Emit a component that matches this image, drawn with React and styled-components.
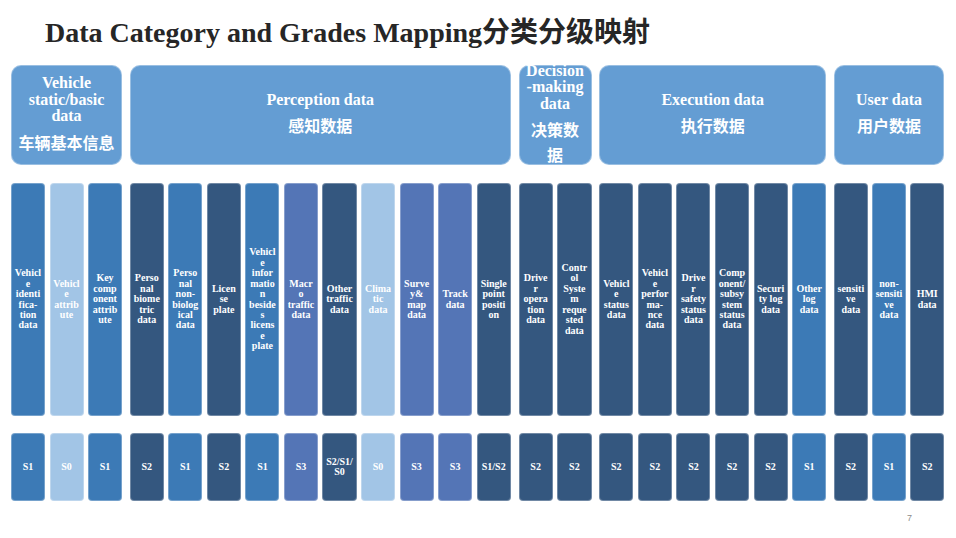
import styled, { createGlobalStyle } from "styled-components";

const GlobalStyle = createGlobalStyle`
	body {
		margin: 0;
		background: #fff;
	}
`;

const COLORS = {
	med: "#3c7ab6",
	light: "#a2c5e6",
	dark: "#34577f",
	peri: "#5475b6",
};

const COL_GAP = 4.5;

const groups = [
	{
		en: "Vehicle\nstatic/basic\ndata",
		zh: "车辆基本信息",
		width: 111,
		cols: [
			["Vehicl\ne\nidenti\nfica-\ntion\ndata", "med", "S1"],
			["Vehicl\ne\nattrib\nute", "light", "S0"],
			["Key\ncomp\nonent\nattrib\nute", "med", "S1"],
		],
	},
	{
		en: "Perception data",
		zh: "感知数据",
		width: 381,
		cols: [
			["Perso\nnal\nbiome\ntric\ndata", "dark", "S2"],
			["Perso\nnal\nnon-\nbiolog\nical\ndata", "med", "S1"],
			["Licen\nse\nplate", "dark", "S2"],
			["Vehicl\ne\ninfor\nmatio\nn\nbeside\ns\nlicens\ne\nplate", "med", "S1"],
			["Macr\no\ntraffic\ndata", "peri", "S3"],
			["Other\ntraffic\ndata", "dark", "S2/S1/\nS0"],
			["Clima\ntic\ndata", "light", "S0"],
			["Surve\ny&\nmap\ndata", "peri", "S3"],
			["Track\ndata", "peri", "S3"],
			["Single\npoint\npositi\non", "dark", "S1/S2"],
		],
	},
	{
		en: "Decision\n-making\ndata",
		zh: "决策数\n据",
		width: 73,
		cols: [
			["Drive\nr\nopera\ntion\ndata", "dark", "S2"],
			["Contr\nol\nSyste\nm\nreque\nsted\ndata", "dark", "S2"],
		],
	},
	{
		en: "Execution data",
		zh: "执行数据",
		width: 227,
		cols: [
			["Vehicl\ne\nstatus\ndata", "dark", "S2"],
			["Vehicl\ne\nperfor\nma-\nnce\ndata", "dark", "S2"],
			["Drive\nr\nsafety\nstatus\ndata", "dark", "S2"],
			["Comp\nonent/\nsubsy\nstem\nstatus\ndata", "dark", "S2"],
			["Securi\nty log\ndata", "dark", "S2"],
			["Other\nlog\ndata", "med", "S1"],
		],
	},
	{
		en: "User data",
		zh: "用户数据",
		width: 110,
		cols: [
			["sensiti\nve\ndata", "dark", "S2"],
			["non-\nsensiti\nve\ndata", "med", "S1"],
			["HMI\ndata", "dark", "S2"],
		],
	},
];

const Slide = styled.div`
	width: 956px;
	height: 538px;
	box-sizing: border-box;
	padding: 16px 0 0 11px;
	font-family: "Liberation Serif", "Noto Sans CJK SC", serif;
	overflow: hidden;
`;

const Title = styled.h1`
	margin: 0 0 15px 34px;
	font-size: 28px;
	line-height: 34px;
	font-weight: 700;
	color: #262626;
	white-space: nowrap;
`;

const Board = styled.div`
	display: flex;
	gap: 7.75px;
	width: 933px;
`;

const Group = styled.div`
	display: flex;
	flex-direction: column;
	flex: none;
	width: ${(props) => props.w}px;
`;

const Header = styled.div`
	height: 100px;
	box-sizing: border-box;
	border-radius: 10px;
	border: 1px solid rgba(255, 255, 255, 0.35);
	background: #649dd3;
	color: #fff;
	display: flex;
	flex-direction: column;
	align-items: center;
	justify-content: center;
	text-align: center;
	padding: 0 6px;
`;

const HeaderEn = styled.div`
	font-size: 16px;
	line-height: 16.5px;
	font-weight: 700;
	white-space: pre-line;
`;

const HeaderZh = styled.div`
	margin-top: 5px;
	font-family: "Noto Sans CJK SC", sans-serif;
	font-size: 16px;
	line-height: 25px;
	font-weight: 700;
	white-space: pre-line;
`;

const ColRow = styled.div`
	display: flex;
	gap: ${COL_GAP}px;
	margin-top: ${(props) => props.top}px;
`;

const Cell = styled.div`
	flex: 1;
	min-width: 0;
	height: ${(props) => props.h}px;
	box-sizing: border-box;
	border-radius: 4px;
	border: 1px solid rgba(255, 255, 255, 0.3);
	background: ${(props) => COLORS[props.tone]};
	color: #fff;
	display: flex;
	align-items: center;
	justify-content: center;
	text-align: center;
	font-size: 10px;
	line-height: 10.4px;
	font-weight: 700;
	white-space: pre;
`;

const Footer = styled.div`
	width: 933px;
	box-sizing: border-box;
	margin-top: 11px;
	padding-right: 32px;
	text-align: right;
	font-family: "Liberation Sans", sans-serif;
	font-size: 9px;
	line-height: 12px;
	color: #8c8c8c;
`;

function CategoryGroup({ group }) {
	return (
		<Group w={group.width}>
			<Header>
				<HeaderEn>{group.en}</HeaderEn>
				<HeaderZh>{group.zh}</HeaderZh>
			</Header>
			<ColRow top={18}>
				{group.cols.map(([label, tone], i) => (
					<Cell key={i} tone={tone} h={233}>
						{label}
					</Cell>
				))}
			</ColRow>
			<ColRow top={17}>
				{group.cols.map(([, tone, grade], i) => (
					<Cell key={i} tone={tone} h={68}>
						{grade}
					</Cell>
				))}
			</ColRow>
		</Group>
	);
}

export default function App() {
	return (
		<>
			<GlobalStyle />
			<Slide>
				<Title>Data Category and Grades Mapping分类分级映射</Title>
				<Board>
					{groups.map((g, i) => (
						<CategoryGroup key={i} group={g} />
					))}
				</Board>
				<Footer>7</Footer>
			</Slide>
		</>
	);
}
